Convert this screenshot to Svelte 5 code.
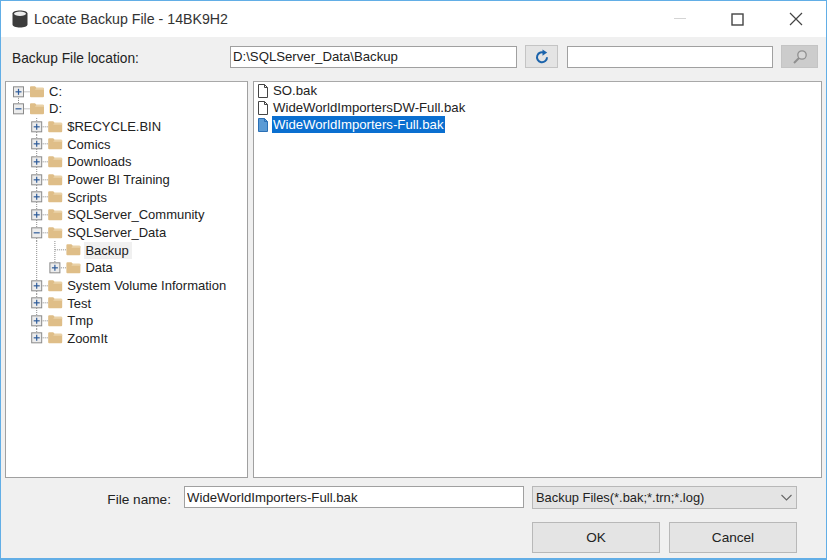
<script>
  const rowH = 17.65;
  const tree = [
    { label: 'C:', depth: 0, toggle: '+', up: false, down: true },
    { label: 'D:', depth: 0, toggle: '-', up: true, down: false },
    { label: '$RECYCLE.BIN', depth: 1, toggle: '+' },
    { label: 'Comics', depth: 1, toggle: '+' },
    { label: 'Downloads', depth: 1, toggle: '+' },
    { label: 'Power BI Training', depth: 1, toggle: '+' },
    { label: 'Scripts', depth: 1, toggle: '+' },
    { label: 'SQLServer_Community', depth: 1, toggle: '+' },
    { label: 'SQLServer_Data', depth: 1, toggle: '-' },
    { label: 'Backup', depth: 2, selected: true },
    { label: 'Data', depth: 2, toggle: '+', last: true },
    { label: 'System Volume Information', depth: 1, toggle: '+' },
    { label: 'Test', depth: 1, toggle: '+' },
    { label: 'Tmp', depth: 1, toggle: '+' },
    { label: 'ZoomIt', depth: 1, toggle: '+', last: true }
  ];
  const files = [
    { name: 'SO.bak' },
    { name: 'WideWorldImportersDW-Full.bak' },
    { name: 'WideWorldImporters-Full.bak', selected: true }
  ];
  // centre of the expander box at each depth
  const boxX = d => 12.5 + d * 18.2;
  const gutterW = d => boxX(d) + 29.5;
</script>

<div class="dialog">
  <header class="titlebar">
    <svg class="dbicon" width="16" height="18" viewBox="0 0 16 18">
      <path d="M0.500 3.500C0.500 1.800 3.800 0.500 8 0.500s7.500 1.300 7.500 3v11c0 1.700-3.300 3-7.500 3s-7.500-1.300-7.500-3z" fill="#3c3c3c"/>
      <ellipse cx="8" cy="3.800" rx="6" ry="2.200" fill="#ededed"/>
    </svg>
    <span class="title">Locate Backup File - 14BK9H2</span>
    <div class="winbtns">
      <svg width="13" height="2" viewBox="0 0 13 2"><rect width="12" height="1" x="1" fill="#d4d4d4"/></svg>
      <svg width="13" height="13" viewBox="0 0 13 13"><rect x="1" y="1" width="11" height="11" fill="none" stroke="#444" stroke-width="1.400"/></svg>
      <svg width="14" height="14" viewBox="0 0 14 14"><path d="M1 1l12 12M13 1L1 13" stroke="#444" stroke-width="1.200" fill="none"/></svg>
    </div>
  </header>

  <div class="body">
    <div class="location">
      <span class="loc-label">Backup File location:</span>
      <input class="field path" value="D:\SQLServer_Data\Backup" readonly />
      <button class="refresh" aria-label="Refresh">
        <svg width="14" height="15" viewBox="0 0 14 15">
          <path d="M9.600 4A5 5 0 1 0 12 8.200" fill="none" stroke="#1b63ab" stroke-width="2"/>
          <path d="M7.500 0.500v6.200l4.700-3.100z" fill="#1b63ab"/>
        </svg>
      </button>
      <input class="field search" value="" readonly />
      <button class="go" aria-label="Search">
        <svg width="16" height="16" viewBox="0 0 16 16">
          <circle cx="10" cy="6" r="4.200" fill="#d6d6d6" stroke="#8f8f8f" stroke-width="1.300"/>
          <path d="M7 9l-5 5" stroke="#8f8f8f" stroke-width="2"/>
        </svg>
      </button>
    </div>

    <div class="panes">
      <div class="pane tree">
        {#each tree as n}
          <div class="row" style="height:{rowH}px">
            <svg class="gutter" width={gutterW(n.depth)} height={rowH} viewBox="0 0 {gutterW(n.depth)} {rowH}">
              {#if n.depth >= 1}
                <line class="dots" x1={boxX(1)} x2={boxX(1)} y1="0" y2={n.depth === 1 && n.last ? rowH / 2 : rowH} />
              {/if}
              {#if n.depth === 2}
                <line class="dots" x1={boxX(2)} x2={boxX(2)} y1="0" y2={n.last ? rowH / 2 : rowH} />
              {/if}
              {#if n.depth === 0}
                <line class="dots" x1={boxX(0)} x2={boxX(0)} y1={n.up ? 0 : rowH / 2} y2={n.down ? rowH : rowH / 2} />
              {/if}
              <line class="dots" x1={boxX(n.depth)} x2={boxX(n.depth) + 11} y1={rowH / 2} y2={rowH / 2} />
              {#if n.toggle}
                <rect x={boxX(n.depth) - 5} y={rowH / 2 - 5} width="10" height="10" fill="#ececec" stroke="#8a8a8a" />
                <path d="M{boxX(n.depth) - 3} {rowH / 2}h6" stroke="#2f5c9a" stroke-width="1.200" />
                {#if n.toggle === '+'}
                  <path d="M{boxX(n.depth)} {rowH / 2 - 3}v6" stroke="#2f5c9a" stroke-width="1.200" />
                {/if}
              {/if}
              <g transform="translate({boxX(n.depth) + 11.500} {rowH / 2 - 5.500})">
                <path d="M0 1q0-1 1-1h4l1.500 1.500H13q1 0 1 1V10q0 1-1 1H1q-1 0-1-1z" fill="#dfbe88"/>
                <path d="M6.500 1.500H13q1 0 1 1v1H5z" fill="#ead2a8"/>
              </g>
            </svg>
            <span class="node" class:selected={n.selected}>{n.label}</span>
          </div>
        {/each}
      </div>

      <div class="pane list">
        {#each files as f}
          <div class="file" class:selected={f.selected}>
            <svg width="12" height="14" viewBox="0 0 12 14">
              <path d="M1.500 0.500h6l3 3v10h-9z" fill={f.selected ? '#5b9bd5' : '#fff'} stroke={f.selected ? '#2a6fb5' : '#444'}/>
              <path d="M7.500 0.500v3h3" fill="none" stroke={f.selected ? '#2a6fb5' : '#444'}/>
            </svg>
            <span class="fname">{f.name}</span>
          </div>
        {/each}
      </div>
    </div>

    <div class="name-row">
      <span class="name-label">File name:</span>
      <input class="field filename" value="WideWorldImporters-Full.bak" readonly />
      <div class="combo">
        <span>Backup Files(*.bak;*.trn;*.log)</span>
        <svg width="11" height="7" viewBox="0 0 11 7"><path d="M0.500 1l5 5 5-5" fill="none" stroke="#666" stroke-width="1.100"/></svg>
      </div>
    </div>

    <div class="actions">
      <button class="btn">OK</button>
      <button class="btn">Cancel</button>
    </div>
  </div>
</div>

<style>
  :global(body) {
    margin: 0;
    background: #f0f0f0;
  }
  .dialog {
    width: 827px;
    height: 560px;
    box-sizing: border-box;
    border: 1px solid #62aee6;
    border-bottom-width: 2px;
    display: flex;
    flex-direction: column;
    font-family: "Liberation Sans", Arial, sans-serif;
    font-size: 13.200px;
    color: #222;
    overflow: hidden;
  }
  .titlebar {
    height: 36px;
    flex: none;
    background: #fff;
    display: flex;
    align-items: center;
    padding-left: 11px;
  }
  .dbicon {
    margin-right: 6px;
  }
  .title {
    font-size: 14.200px;
    color: #333;
  }
  .winbtns {
    margin-left: auto;
    display: flex;
    align-items: center;
    gap: 45px;
    padding-right: 23px;
  }
  .body {
    flex: 1;
    background: #f0f0f0;
    display: flex;
    flex-direction: column;
    padding: 0 4px;
    min-height: 0;
  }
  .location {
    display: flex;
    align-items: center;
    box-sizing: border-box;
    height: 44px;
    padding-bottom: 5px;
    flex: none;
  }
  .loc-label {
    width: 225px;
    padding-left: 7px;
    box-sizing: border-box;
    font-size: 13.750px;
    position: relative;
    top: 1.500px;
  }
  .field {
    box-sizing: border-box;
    height: 22px;
    background: #fff;
    border: 1px solid #a0a0a0;
    border-radius: 0;
    padding: 0 2px;
    margin: 0;
    font: inherit;
    color: #222;
    outline: none;
  }
  .path {
    width: 287px;
  }
  .search {
    width: 206px;
    margin-left: 9px;
  }
  .refresh, .go {
    box-sizing: border-box;
    height: 23px;
    padding: 0;
    display: flex;
    align-items: center;
    justify-content: center;
  }
  .refresh {
    width: 33px;
    margin-left: 8px;
    background: #e4e4e4;
    border: 1px solid #c4c4c4;
  }
  .go {
    width: 37px;
    margin-left: 8px;
    background: #cccccc;
    border: 1px solid #c4c4c4;
  }
  .panes {
    display: flex;
    gap: 5px;
    height: 397px;
    flex: none;
  }
  .pane {
    box-sizing: border-box;
    background: #fff;
    border: 1px solid #a0a0a0;
    border-top-color: #a8a8a8;
  }
  .tree {
    width: 243px;
    padding-top: 0.500px;
    font-size: 13px;
  }
  .list {
    width: 569px;
    padding: 0 0 0 3px;
  }
  .row {
    display: flex;
    align-items: center;
    white-space: nowrap;
  }
  .gutter {
    flex: none;
    display: block;
  }
  .dots {
    stroke: #8a8a8a;
    stroke-width: 1;
    stroke-dasharray: 1 1;
    fill: none;
  }
  .node {
    padding: 0 1px;
    line-height: 17px;
  }
  .node.selected {
    background: #f0f0f0;
    padding: 0 3px 0 1px;
  }
  .file {
    display: flex;
    align-items: center;
    height: 17px;
    gap: 3px;
  }
  .file svg {
    flex: none;
  }
  .fname {
    line-height: 17px;
    padding: 0 1px;
  }
  .file.selected .fname {
    background: #0a6fd0;
    color: #fff;
  }
  .name-row {
    display: flex;
    align-items: center;
    height: 38px;
    flex: none;
  }
  .name-label {
    width: 179px;
    text-align: right;
    padding-right: 13px;
    box-sizing: border-box;
    font-size: 13.650px;
    position: relative;
    top: 2px;
  }
  .filename {
    width: 340px;
  }
  .combo {
    box-sizing: border-box;
    width: 265px;
    height: 23px;
    margin-left: 8px;
    background: #e4e4e4;
    border: 1px solid #b8b8b8;
    font-size: 12.900px;
    display: flex;
    align-items: center;
    justify-content: space-between;
    padding: 0 4px 0 3px;
  }
  .actions {
    display: flex;
    justify-content: flex-end;
    gap: 9px;
    padding-right: 25px;
    padding-top: 6px;
  }
  .btn {
    box-sizing: border-box;
    width: 128px;
    height: 31px;
    background: #e4e4e4;
    border: 1px solid #b8b8b8;
    font: inherit;
    font-size: 13.600px;
    color: #222;
    padding: 0;
  }
</style>
